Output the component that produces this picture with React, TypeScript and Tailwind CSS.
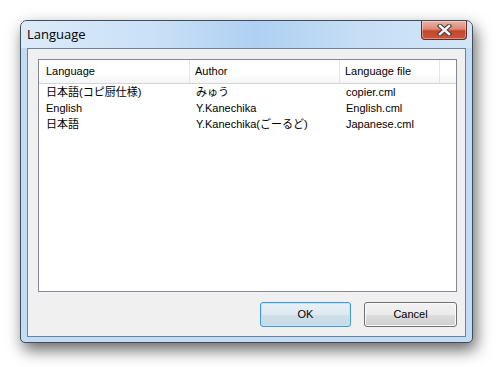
import React from 'react';

// 言語リストのデータ
const rows = [
  { lang: '日本語(コピ厨仕様)', author: 'みゅう', file: 'copier.cml' },
  { lang: 'English', author: 'Y.Kanechika', file: 'English.cml' },
  { lang: '日本語', author: 'Y.Kanechika(ごーるど)', file: 'Japanese.cml' },
];

const uiFont = { fontFamily: '"Liberation Sans", "Noto Sans CJK JP", sans-serif' };

const CloseButton: React.FC = () => (
  <div className="mr-[5px] flex h-[19px] w-[46px] items-center justify-center rounded-b-[4px] border border-t-0 border-[#6b2a1f] bg-[linear-gradient(to_bottom,#eab3a6_0%,#dd8a76_45%,#c7452d_55%,#c9563d_100%)] shadow-[inset_0_0_0_1px_rgba(255,255,255,0.35)]">
    <svg width="15" height="12" viewBox="0 0 15 12">
      <path d="M3 2 L12 10 M12 2 L3 10" stroke="#3b3b3b" strokeWidth="4.5" strokeLinecap="square" />
      <path d="M3 2 L12 10 M12 2 L3 10" stroke="#f4f4f4" strokeWidth="2.5" strokeLinecap="square" />
    </svg>
  </div>
);

const App: React.FC = () => {
  return (
    <div className="h-[367px] w-[497px] overflow-hidden bg-white pl-[20px] pt-[20px]">
      {/* ウィンドウ */}
      <div className="flex h-[323px] w-[453px] flex-col rounded-t-[7px] rounded-b-[5px] border border-[#404d5c] bg-[#c2dcf5] shadow-[3px_7px_16px_rgba(0,0,0,0.6)]">
        {/* タイトルバー */}
        <div className="flex h-[27px] items-start justify-between rounded-t-[6px] bg-[linear-gradient(to_right,#dcebf9_0%,#c9e0f7_30%,#aed0f2_52%,#c6def6_75%,#d3e6f8_100%)]">
          <span
            className="pl-[6px] pt-[4px] text-[13px] leading-[18px] text-black"
            style={{ fontFamily: '"Open Sans", "Noto Sans", sans-serif' }}
          >
            Language
          </span>
          <CloseButton />
        </div>

        {/* クライアント領域 */}
        <div className="flex flex-1 px-[6px] pb-[5px]">
          <div
            className="flex h-[289px] w-[439px] flex-col border border-[#6f8398] bg-[#f0f0f0] pl-[10px] pr-[8px] pt-[10px]"
            style={uiFont}
          >
            {/* リストビュー */}
            <div className="flex h-[233px] w-[419px] flex-col border border-[#828790] bg-white text-[11px] text-black">
              <div className="flex h-[24px] border-b border-[#d5d5d5] bg-[linear-gradient(to_bottom,#ffffff_0%,#ffffff_55%,#f4f5f6_100%)]">
                <div className="flex w-[151px] items-center border-r border-[#e2e5ea] pl-[7px] leading-none">Language</div>
                <div className="flex w-[150px] items-center border-r border-[#e2e5ea] pl-[5px] leading-none">Author</div>
                <div className="flex w-[100px] items-center border-r border-[#e2e5ea] pl-[5px] leading-none">Language file</div>
                <div className="flex-1" />
              </div>
              {rows.map((r, i) => (
                <div key={i} className="flex h-[16px] items-center leading-none">
                  <div className="w-[151px] pl-[7px]">{r.lang}</div>
                  <div className="w-[150px] pl-[6px]">{r.author}</div>
                  <div className="w-[100px] pl-[6px]">{r.file}</div>
                </div>
              ))}
            </div>

            {/* ボタン */}
            <div className="mt-[10px] flex w-[419px] justify-end gap-[13px] text-[11px] text-black">
              <button className="flex h-[25px] w-[91px] items-center justify-center rounded-[3px] border border-[#3c9ad3] bg-[linear-gradient(to_bottom,#e9f1f7_0%,#dfe9f1_50%,#cfdfea_51%,#c8dae6_100%)] shadow-[inset_0_0_0_1px_#bfe6f9]">
                OK
              </button>
              <button className="flex h-[25px] w-[93px] items-center justify-center rounded-[3px] border border-[#707070] bg-[linear-gradient(to_bottom,#f2f2f2_0%,#ebebeb_50%,#dddddd_51%,#cfcfcf_100%)] shadow-[inset_0_0_0_1px_#fbfbfb]">
                Cancel
              </button>
            </div>
          </div>
        </div>
      </div>
    </div>
  );
};

export default App;
